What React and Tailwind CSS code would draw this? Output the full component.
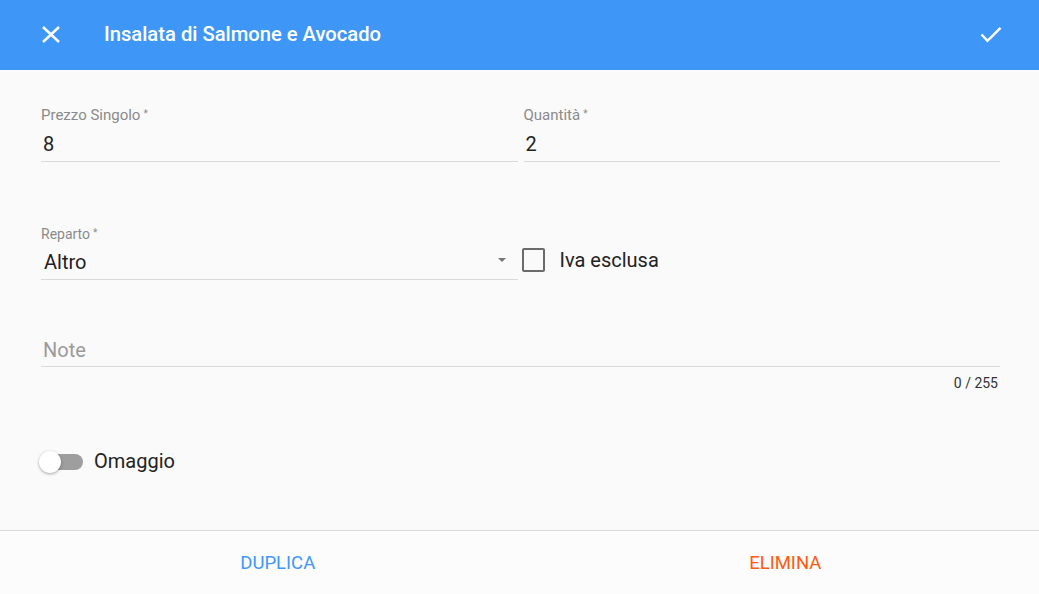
import React from "react";

const font = { fontFamily: "Roboto, 'Noto Sans', sans-serif" };

function Label({ children, size = "text-[15px] leading-[18px]" }) {
  return (
    <div className={`${size} text-[#8a8a8a] whitespace-nowrap`}>
      {children}
      <span className="ml-[3px] text-[10px] align-top relative top-[-1px]">*</span>
    </div>
  );
}

export default function App() {
  return (
    <div className="w-[1039px] h-[594px] bg-[#fafafa] flex flex-col overflow-hidden" style={font}>
      {/* Header */}
      <div className="h-[70px] bg-[#3e97f7] flex items-center pl-[42px] pr-[37px] shrink-0">
        <svg width="18" height="17" viewBox="0 0 18 17" className="shrink-0 -mt-[1px]">
          <path d="M1 1 L17 16 M17 1 L1 16" stroke="white" strokeWidth="2.4" fill="none" />
        </svg>
        <div className="ml-[44px] text-white text-[20.2px] leading-[24px] font-medium -mt-[3px] flex-1">
          Insalata di Salmone e Avocado
        </div>
        <svg width="22" height="18" viewBox="0 0 22 18" className="shrink-0 -mt-[1px]">
          <polyline points="1.5,8.5 7.5,14.8 20.5,1.8" stroke="white" strokeWidth="2.5" fill="none" />
        </svg>
      </div>

      {/* Body */}
      <div className="flex-1 pl-[41px] pr-[39px] pt-[36px]">
        {/* Row 1 */}
        <div className="grid grid-cols-2 gap-[6px]">
          <div>
            <Label>Prezzo Singolo</Label>
            <div className="mt-[8px] pb-[5px] border-b border-[#dadada] text-[20px] leading-[24px] text-[#222] pl-[2px]">8</div>
          </div>
          <div>
            <Label>Quantità</Label>
            <div className="mt-[8px] pb-[5px] border-b border-[#dadada] text-[20px] leading-[24px] text-[#222] pl-[2px]">2</div>
          </div>
        </div>

        {/* Row 2 */}
        <div className="grid grid-cols-2 gap-[6px] mt-[64px]">
          <div>
            <Label size="text-[14px] leading-[16px]">Reparto</Label>
            <div className="mt-[8px] pb-[5px] border-b border-[#dadada] flex items-start justify-between">
              <span className="text-[20px] leading-[24px] text-[#222] pl-[3px]">Altro</span>
              <svg width="8" height="4" viewBox="0 0 8 4" className="mt-[8px] mr-[12px]">
                <path d="M0 0 L8 0 L4 4 Z" fill="#777" />
              </svg>
            </div>
          </div>
          <div className="mt-[22px] flex items-center h-[24px] -ml-[2px]">
            <div className="w-[23px] h-[24px] border-[2.5px] border-[#6b6b6b] rounded-[2px]" />
            <span className="ml-[15px] text-[20px] leading-[24px] text-[#222]">Iva esclusa</span>
          </div>
        </div>

        {/* Note */}
        <div className="mt-[58px]">
          <div className="pb-[4px] border-b border-[#dadada] text-[20px] leading-[24px] text-[#9a9a9a] pl-[2px]">Note</div>
          <div className="mt-[8px] text-right text-[14px] leading-[17px] text-[#333] pr-[2px]">0 / 255</div>
        </div>

        {/* Toggle */}
        <div className="mt-[57px] flex items-center h-[24px]">
          <div className="relative w-[44px] h-[24px] -ml-[2px] shrink-0">
            <div className="absolute left-[6px] top-[5px] w-[38px] h-[16px] rounded-full bg-[#9e9e9e]" />
            <div className="absolute left-0 top-[2px] w-[22px] h-[22px] rounded-full bg-white shadow-[0_1px_3px_rgba(0,0,0,0.35)]" />
          </div>
          <span className="ml-[11px] text-[20px] leading-[24px] text-[#222]">Omaggio</span>
        </div>
      </div>

      {/* Footer */}
      <div className="h-[64px] border-t border-[#d9d9d9] bg-[#fcfcfc] flex shrink-0">
        <div className="flex-1 flex items-center justify-center pl-[24px]">
          <span className="text-[18.5px] leading-[22px] text-[#3f98f7]">DUPLICA</span>
        </div>
        <div className="flex-1 flex items-center justify-center pl-[0px]">
          <span className="text-[18.5px] leading-[22px] text-[#ff5a10]">ELIMINA</span>
        </div>
      </div>
    </div>
  );
}
